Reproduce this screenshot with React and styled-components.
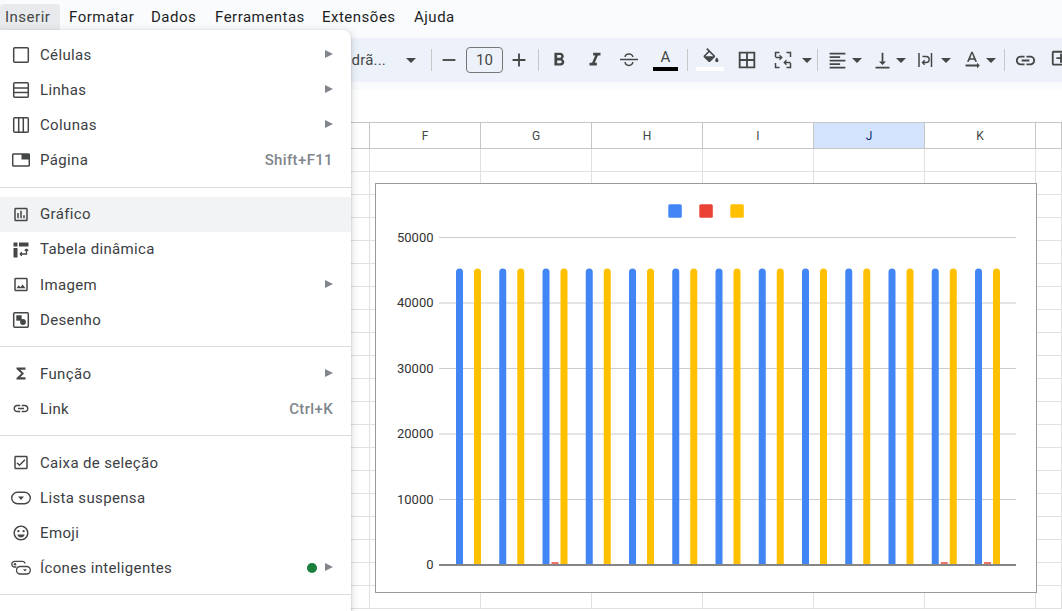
import React from "react";
import styled, { createGlobalStyle } from "styled-components";
import {
  MdAdd,
  MdBorderAll,
  MdFormatAlignLeft,
  MdFormatBold,
  MdFormatItalic,
  MdFunctions,
  MdLink,
  MdOutlineAddComment,
  MdOutlineCheckBox,
  MdOutlineEmojiEmotions,
  MdOutlineImage,
  MdOutlineInsertChart,
  MdRemove,
  MdTextRotationNone,
  MdVerticalAlignBottom,
} from "react-icons/md";

const GlobalStyle = createGlobalStyle`
  html, body {
    margin: 0;
    padding: 0;
    background: #fff;
    overflow: hidden;
  }
`;

const Page = styled.div`
  position: relative;
  width: 1062px;
  height: 611px;
  overflow: hidden;
  display: flex;
  flex-direction: column;
  font-family: Roboto, "Liberation Sans", sans-serif;
`;

const MenuBar = styled.div`
  height: 30px;
  flex: none;
  background: #f9fbfd;
  display: flex;
  align-items: flex-end;
`;

const MenuTab = styled.div`
  height: 26px;
  width: ${(p) => p.$w}px;
  box-sizing: border-box;
  padding-left: ${(p) => p.$pad}px;
  display: flex;
  align-items: center;
  font-size: 15px;
  letter-spacing: 0.5px;
  color: ${(p) => (p.$open ? "#444746" : "#1f1f1f")};
  background: ${(p) => (p.$open ? "#e8eaed" : "transparent")};
  border-radius: 4px 4px 0 0;
`;

const ToolbarWrap = styled.div`
  height: 60px;
  flex: none;
  box-sizing: border-box;
  padding: 8px 0;
  background: #f9fbfd;
`;

const Toolbar = styled.div`
  height: 44px;
  background: #edf2fa;
  display: flex;
  align-items: center;
  padding-left: 300px;
  overflow: hidden;
  color: #444746;
`;

const FontSelect = styled.div`
  width: 131px;
  flex: none;
  display: flex;
  align-items: center;
  justify-content: flex-end;
  gap: 20px;
  padding-right: 15px;
  box-sizing: border-box;
  font-size: 15px;
  letter-spacing: 0.2px;
  color: #444746;
`;

const Sep = styled.div`
  width: 1px;
  height: 22px;
  flex: none;
  background: #c7c7c7;
  margin-left: ${(p) => p.$ml || 0}px;
`;

const Tool = styled.div`
  width: ${(p) => p.$w}px;
  margin-left: ${(p) => p.$ml || 0}px;
  flex: none;
  display: flex;
  flex-direction: column;
  align-items: center;
  justify-content: center;
  color: #444746;
  font-size: ${(p) => p.$size || 20}px;
`;

const Caret = styled.div`
  width: 0;
  height: 0;
  flex: none;
  margin-top: 1px;
  border-left: 5px solid transparent;
  border-right: 5px solid transparent;
  border-top: 5px solid #444746;
`;

const SizeBox = styled.div`
  width: 37px;
  height: 26px;
  flex: none;
  box-sizing: border-box;
  border: 1px solid #747775;
  border-radius: 4px;
  display: flex;
  align-items: center;
  justify-content: center;
  font-size: 15px;
  color: #444746;
`;

const ColorLetter = styled.div`
  font-size: 15px;
  line-height: 17px;
  height: 17px;
  color: #444746;
`;

const ColorBar = styled.div`
  width: ${(p) => p.$w}px;
  height: 4px;
  margin-top: 1px;
  background: ${(p) => p.$color};
`;

const FillIcon = styled.div`
  height: 17px;
  display: flex;
  align-items: flex-start;
  margin-top: -1px;
  margin-bottom: 1px;
  padding-left: 2px;
`;

const FormulaBar = styled.div`
  height: 32px;
  flex: none;
  background: #fff;
`;

const Sheet = styled.div`
  position: relative;
  flex: 1;
  overflow: hidden;
`;

const HeaderRow = styled.div`
  height: 27px;
  box-sizing: border-box;
  display: grid;
  grid-template-columns: 370px repeat(6, 111px) 1fr;
  border-top: 1px solid #c4c7c5;
  border-bottom: 1px solid #c4c7c5;
`;

const HeaderCell = styled.div`
  border-right: 1px solid #c4c7c5;
  display: flex;
  align-items: center;
  justify-content: center;
  font-size: 12px;
  font-family: Roboto, sans-serif;
  color: ${(p) => (p.$active ? "#0b2e6e" : "#444746")};
  background: ${(p) => (p.$active ? "#d3e3fd" : "#fff")};
`;

const Row = styled.div`
  height: 23px;
  box-sizing: border-box;
  display: grid;
  grid-template-columns: 370px repeat(6, 111px) 1fr;
  border-bottom: 1px solid #e1e1e1;
`;

const Cell = styled.div`
  border-right: 1px solid #e1e1e1;
`;

const ChartBox = styled.div`
  position: absolute;
  left: 375px;
  top: 61px;
  width: 662px;
  height: 410px;
  box-sizing: border-box;
  border: 1px solid #9a9a9a;
  background: #fff;

  svg {
    display: block;
  }
`;

const Menu = styled.div`
  position: absolute;
  left: 0;
  top: 30px;
  bottom: 0;
  width: 351px;
  box-sizing: border-box;
  padding-top: 7px;
  background: #fff;
  border-radius: 0 8px 0 0;
  box-shadow: 0 2px 6px 2px rgba(60, 64, 67, 0.15), 0 1px 2px rgba(60, 64, 67, 0.3);
`;

const Item = styled.div`
  height: 35px;
  display: flex;
  align-items: center;
  padding: 0 18px 0 12px;
  background: ${(p) => (p.$hover ? "#f1f3f4" : "transparent")};
  color: #3c4043;
  font-size: 15px;
  letter-spacing: 0.35px;
`;

const ItemIcon = styled.div`
  width: 18px;
  height: 18px;
  flex: none;
  margin-right: 10px;
  display: flex;
  align-items: center;
  justify-content: center;
  color: #444746;
  font-size: 21px;
`;

const ItemLabel = styled.div`
  flex: 1;
  padding-bottom: ${(p) => (p.$lift ? 2 : 0)}px;
`;

const Shortcut = styled.div`
  color: #80868b;
  font-weight: 500;
`;

const SubArrow = styled.div`
  width: 0;
  height: 0;
  flex: none;
  margin-top: -2px;
  border-top: 4px solid transparent;
  border-bottom: 4px solid transparent;
  border-left: 8px solid #80868b;
`;

const GreenDot = styled.div`
  width: 10px;
  height: 10px;
  flex: none;
  margin-right: 8px;
  border-radius: 50%;
  background: #188038;
`;

const Divider = styled.div`
  height: 1px;
  margin: ${(p) => (p.$first ? "10px 0 9px" : "9px 0")};
  background: #dadce0;
`;

const Svg = ({ children, size = 18 }) => (
  <svg width={size} height={size} viewBox="0 0 18 18" fill="none" stroke="currentColor" strokeWidth="1.5">
    {children}
  </svg>
);

const CellsIcon = () => (
  <Svg>
    <rect x="1.7" y="1.7" width="14.600" height="14.600" rx="1" />
  </Svg>
);

const RowsIcon = () => (
  <Svg>
    <rect x="1.7" y="1.7" width="14.600" height="14.600" rx="1" />
    <path d="M2 7h14M2 11.500h14" />
  </Svg>
);

const ColumnsIcon = () => (
  <Svg>
    <rect x="1.7" y="1.7" width="14.600" height="14.600" rx="1" />
    <path d="M6.700 2v14M11.300 2v14" />
  </Svg>
);

const PageIcon = () => (
  <Svg>
    <rect x="0.700" y="3" width="16.600" height="12" rx="1" />
    <rect x="9.500" y="3" width="8" height="5.500" fill="currentColor" stroke="none" />
  </Svg>
);

const PivotIcon = () => (
  <Svg>
    <path d="M1.500 1.500h4v4h-4zM7 1.500h9.500v4H7zM1.500 7h4v9.500h-4z" fill="currentColor" stroke="none" />
    <path d="M8 13h7M8 13l1.800-1.700M8 13l1.800 1.700M14.500 8v5.500M14.500 8l-1.700 1.800M14.500 8l1.700 1.800" strokeWidth="1.300" />
  </Svg>
);

const DrawingIcon = () => (
  <Svg>
    <rect x="1.700" y="1.700" width="14.600" height="14.600" rx="1" />
    <rect x="4.300" y="4.300" width="5.400" height="5.400" fill="currentColor" stroke="none" />
    <circle cx="11" cy="11" r="2.900" fill="currentColor" stroke="none" />
  </Svg>
);

const DropdownIcon = () => (
  <svg width="20" height="18" viewBox="0 0 20 18" fill="none" stroke="currentColor" strokeWidth="1.400" style={{ flex: "none" }}>
    <rect x="0.700" y="3.200" width="18.600" height="11.600" rx="5.800" />
    <path d="M7 7.500h6L10 11z" fill="currentColor" stroke="none" />
  </svg>
);

const ChipsIcon = () => (
  <svg width="20" height="18" viewBox="0 0 20 18" fill="none" stroke="currentColor" strokeWidth="1.300" style={{ flex: "none" }}>
    <path d="M5.500 8H3.600a2.800 2.800 0 0 1 0-5.600h7.900a2.800 2.800 0 0 1 2.700 2.100" />
    <rect x="5.500" y="7.500" width="13.800" height="7.500" rx="3.700" />
    <circle cx="4" cy="5.200" r="1.200" fill="currentColor" stroke="none" />
    <path d="M12 10.200h4L14 12.500z" fill="currentColor" stroke="none" />
  </svg>
);

const StrikeIcon = () => (
  <Svg>
    <path d="M0 8.500h18M5.200 6c0-4 7.600-4 7.600 0M5.200 11c0 4.500 7.600 4.500 7.600 0" />
  </Svg>
);

const FillSvg = () => (
  <svg width="20" height="14.200" viewBox="0 0 24 17" fill="currentColor">
    <path d="M16.560 8.940L7.620 0 6.210 1.410l2.380 2.380-5.150 5.150c-.59.59-.59 1.540 0 2.120l5.500 5.500c.29.29.68.44 1.060.44s.77-.15 1.060-.44l5.500-5.500c.59-.58.59-1.530 0-2.110zM5.210 10L10 5.210 14.790 10H5.210zM19 11.500s-2 2.170-2 3.500c0 1.100.9 2 2 2s2-.9 2-2c0-1.330-2-3.500-2-3.500z" />
  </svg>
);

const MergeIcon = () => (
  <Svg>
    <path d="M5.500 1.500H1.500v4.500M1.500 12v4.500h4M12.500 1.500h4v4.500M16.500 12v4.500h-4" />
    <path d="M1.500 6.500h6M5.500 4.300l2.300 2.200-2.300 2.200M16.500 11.500h-6M12.500 9.300l-2.300 2.200 2.300 2.200" strokeWidth="1.300" />
  </Svg>
);

const WrapIcon = () => (
  <Svg>
    <path d="M3 2v14M15.500 2v14" />
    <path d="M6.500 5.500h3.700a3 3 0 0 1 0 6H6.500M8.700 9.300l-2.200 2.200 2.200 2.200" strokeWidth="1.400" />
  </Svg>
);

const items = [
  [
    { label: "Células", icon: <CellsIcon />, sub: true },
    { label: "Linhas", icon: <RowsIcon />, sub: true },
    { label: "Colunas", icon: <ColumnsIcon />, sub: true },
    { label: "Página", icon: <PageIcon />, shortcut: "Shift+F11" },
  ],
  [
    { label: "Gráfico", icon: <MdOutlineInsertChart />, hover: true, lift: true },
    { label: "Tabela dinâmica", icon: <PivotIcon />, lift: true },
    { label: "Imagem", icon: <MdOutlineImage />, sub: true },
    { label: "Desenho", icon: <DrawingIcon /> },
  ],
  [
    { label: "Função", icon: <MdFunctions size={23} />, sub: true },
    { label: "Link", icon: <MdLink size={23} />, shortcut: "Ctrl+K" },
  ],
  [
    { label: "Caixa de seleção", icon: <MdOutlineCheckBox /> },
    { label: "Lista suspensa", icon: <DropdownIcon /> },
    { label: "Emoji", icon: <MdOutlineEmojiEmotions size={22} /> },
    { label: "Ícones inteligentes", icon: <ChipsIcon />, sub: true, dot: true },
  ],
];

const tabs = [
  ["Inserir", 60, 5, true],
  ["Formatar", 82, 9],
  ["Dados", 64, 9],
  ["Ferramentas", 107, 9],
  ["Extensões", 92, 9],
  ["Ajuda", 60, 9],
];

const columns = ["", "F", "G", "H", "I", "J", "K", ""];
const rowNumbers = Array.from({ length: 20 }, (_, i) => i);

const groups = Array.from({ length: 13 }, (_, i) => 456 + i * 43.25);
const ticks = [0, 10000, 20000, 30000, 40000, 50000];
const tickY = (v) => 565 - (v / 50000) * 327.500;

const Bar = ({ x, color }) => (
  <path d={`M${x} 565V272a3.500 3.500 0 0 1 7 0V565z`} fill={color} />
);

const Chart = () => (
  <svg width="660" height="408" viewBox="376 184 660 408">
    {[668.300, 699.300, 730.300].map((x, i) => (
      <rect key={x} x={x} y="204.300" width="13.500" height="13.500" rx="1.500" fill={["#4285f4", "#ea4335", "#ffc000"][i]} />
    ))}
    {ticks.map((t) => (
      <g key={t}>
        <text x="433.500" y={tickY(t) + 4} textAnchor="end" fontSize="13" fontFamily="Roboto, sans-serif" fill="#333">
          {t}
        </text>
        {t > 0 && <rect x="439" y={tickY(t) - 0.500} width="577" height="1" fill="#ccc" />}
      </g>
    ))}
    {groups.map((x) => (
      <g key={x}>
        <Bar x={x} color="#4285f4" />
        <Bar x={x + 18} color="#ffc000" />
      </g>
    ))}
    {[2, 11, 12].map((i) => (
      <rect key={i} x={groups[i] + 9} y="562" width="7" height="2" fill="#ea4335" opacity="0.75" />
    ))}
    <rect x="439" y="564" width="577" height="2" fill="#858585" />
  </svg>
);

export default function App() {
  return (
    <>
      <GlobalStyle />
      <Page>
        <MenuBar>
          {tabs.map(([name, w, pad, open]) => (
            <MenuTab key={name} $w={w} $pad={pad} $open={open}>
              {name}
            </MenuTab>
          ))}
        </MenuBar>
        <ToolbarWrap>
          <Toolbar>
            <FontSelect>
              Padrã...
              <Caret />
            </FontSelect>
            <Sep />
            <Tool $w={34} $size={22}><MdRemove /></Tool>
            <SizeBox>10</SizeBox>
            <Tool $w={32} $size={22}><MdAdd /></Tool>
            <Sep $ml={3} />
            <Tool $w={40} $size={22}><MdFormatBold /></Tool>
            <Tool $w={31} $size={22}><MdFormatItalic /></Tool>
            <Tool $w={38}><StrikeIcon /></Tool>
            <Tool $w={35}>
              <ColorLetter>A</ColorLetter>
              <ColorBar $w={25} $color="#000" />
            </Tool>
            <Sep $ml={4} />
            <Tool $w={43}>
              <FillIcon><FillSvg /></FillIcon>
              <ColorBar $w={28} $color="#fff" />
            </Tool>
            <Tool $w={32} $size={22}><MdBorderAll /></Tool>
            <Tool $w={39}><MergeIcon /></Tool>
            <Caret />
            <Sep $ml={5} />
            <Tool $w={30} $ml={4} $size={21}><MdFormatAlignLeft /></Tool>
            <Caret />
            <Tool $w={28} $ml={6} $size={21}><MdVerticalAlignBottom /></Tool>
            <Caret />
            <Tool $w={32} $ml={3}><WrapIcon /></Tool>
            <Caret />
            <Tool $w={28} $ml={7} $size={22}><MdTextRotationNone /></Tool>
            <Caret />
            <Sep $ml={8} />
            <Tool $w={41} $size={23}><MdLink /></Tool>
            <Tool $w={30} $size={22}><MdOutlineAddComment /></Tool>
          </Toolbar>
        </ToolbarWrap>
        <FormulaBar />
        <Sheet>
          <HeaderRow>
            {columns.map((c, i) => (
              <HeaderCell key={i} $active={c === "J"}>{c}</HeaderCell>
            ))}
          </HeaderRow>
          {rowNumbers.map((r) => (
            <Row key={r}>
              {columns.map((_, i) => (
                <Cell key={i} />
              ))}
            </Row>
          ))}
          <ChartBox>
            <Chart />
          </ChartBox>
        </Sheet>
        <Menu>
          {items.map((section, s) => (
            <React.Fragment key={s}>
              {section.map((it) => (
                <Item key={it.label} $hover={it.hover}>
                  <ItemIcon>{it.icon}</ItemIcon>
                  <ItemLabel $lift={it.lift}>{it.label}</ItemLabel>
                  {it.shortcut && <Shortcut>{it.shortcut}</Shortcut>}
                  {it.dot && <GreenDot />}
                  {it.sub && <SubArrow />}
                </Item>
              ))}
              <Divider $first={s === 0} />
            </React.Fragment>
          ))}
        </Menu>
      </Page>
    </>
  );
}
